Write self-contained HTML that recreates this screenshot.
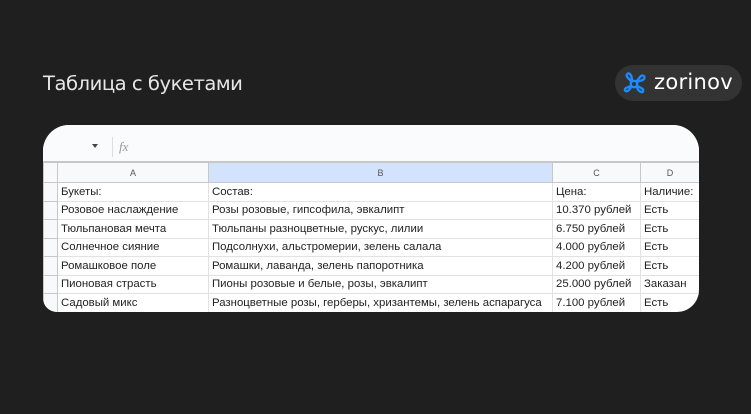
<!DOCTYPE html>
<html><head><meta charset="utf-8"><style>
html,body{margin:0;padding:0}
body{width:751px;height:414px;background:#1f1f1f;position:relative;overflow:hidden;font-family:"Liberation Sans",Arial,sans-serif}
.title{position:absolute;left:43px;top:72px;color:#e6e6e6;font-size:19.6px;font-family:"DejaVu Sans","Liberation Sans",sans-serif;letter-spacing:-0.5px}
.logo{position:absolute;left:615px;top:65px;width:127px;height:36px;border-radius:18px;background:#333}
.logo span{position:absolute;left:39px;top:5px;color:#fff;font-size:21px;font-family:"DejaVu Sans",sans-serif;letter-spacing:0.3px}
.card{position:absolute;left:43px;top:125px;width:656px;height:187px;background:#fff;border-radius:26px 26px 22px 14px;overflow:hidden}
.bar{position:absolute;left:0;top:0;width:656px;height:36px;background:#f9fbfd;border-bottom:1px solid #c7c7c7}
.fx{position:absolute;left:76px;top:14px;font-style:italic;font-family:"Liberation Serif",serif;color:#999;font-size:13px}
.tri{position:absolute;left:49px;top:19px;width:0;height:0;border-left:3.5px solid transparent;border-right:3.5px solid transparent;border-top:4px solid #444}
.sep{position:absolute;left:69px;top:12px;width:1px;height:20px;background:#ddd}
table{position:absolute;left:0;top:37px;border-collapse:collapse;font-size:11.4px;color:#222;table-layout:fixed;width:656px}
td{border:1px solid #e2e2e2;padding:0 0 0 3px;height:17.5px;white-space:nowrap;overflow:hidden}
tr.h td{height:19px;background:#f8f9fa;color:#555;font-size:9px;text-align:center;padding:0;border-color:#c7c7c7}
tr.h td.sel{background:#d3e3fd}
td.rh{background:#f8f9fa;padding:0;border-color:#c7c7c7}
</style></head><body>
<div class="title">Таблица с букетами</div>
<div class="logo">
<svg width="30" height="30" viewBox="0 0 30 30" style="position:absolute;left:5px;top:4px" fill="none" stroke="#1a8cff" stroke-width="2.3">
<circle cx="14" cy="15" r="3.2"/>
<path d="M12 13 L8 9 C5 6 8 3 10 5 C12 7 12 10 12 13"/>
<path d="M16 13 L20 8 C22 5 26 7 24 10 C22 12 19 12 16 13"/>
<path d="M16.5 16.5 L21 19 C24 20 24 24 21 23 C18 22 17 19 16.5 16.5"/>
<path d="M12 17 L9 21 C6 24 3 21 6 19 C8 18 10 17 12 17"/>
</svg><span>zorinov</span></div>
<div class="card">
<div class="bar"><div class="tri"></div><div class="sep"></div><div class="fx">fx</div></div>
<table>
<colgroup><col style="width:14px"><col style="width:151px"><col style="width:344px"><col style="width:88px"><col style="width:59px"></colgroup>
<tr class="h"><td class="rh"></td><td>A</td><td class="sel">B</td><td>C</td><td>D</td></tr>
<tr><td class="rh"></td><td>Букеты:</td><td>Состав:</td><td>Цена:</td><td>Наличие:</td></tr>
<tr><td class="rh"></td><td>Розовое наслаждение</td><td>Розы розовые, гипсофила, эвкалипт</td><td>10.370 рублей</td><td>Есть</td></tr>
<tr><td class="rh"></td><td>Тюльпановая мечта</td><td>Тюльпаны разноцветные, рускус, лилии</td><td>6.750 рублей</td><td>Есть</td></tr>
<tr><td class="rh"></td><td>Солнечное сияние</td><td>Подсолнухи, альстромерии, зелень салала</td><td>4.000 рублей</td><td>Есть</td></tr>
<tr><td class="rh"></td><td>Ромашковое поле</td><td>Ромашки, лаванда, зелень папоротника</td><td>4.200 рублей</td><td>Есть</td></tr>
<tr><td class="rh"></td><td>Пионовая страсть</td><td>Пионы розовые и белые, розы, эвкалипт</td><td>25.000 рублей</td><td>Заказан</td></tr>
<tr><td class="rh"></td><td>Садовый микс</td><td>Разноцветные розы, герберы, хризантемы, зелень аспарагуса</td><td>7.100 рублей</td><td>Есть</td></tr>
</table>
</div>
</body></html>
